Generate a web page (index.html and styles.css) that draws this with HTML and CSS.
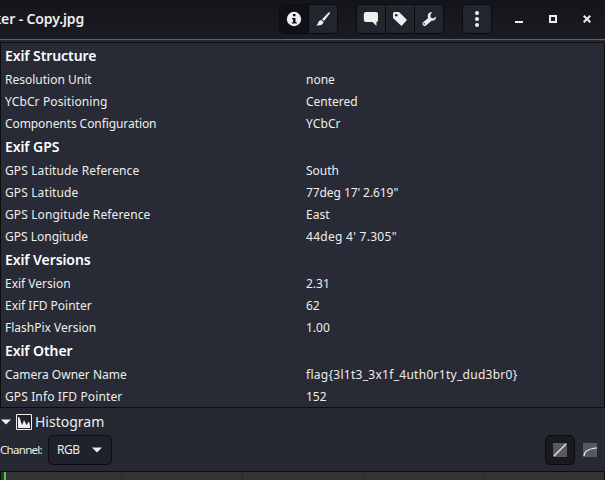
FILE: index.html
```html
<!DOCTYPE html>
<html lang="en"><head><meta charset="utf-8"><title>Metadata</title><link rel="stylesheet" href="styles.css"></head>
<body>
<header class="titlebar">
  <div class="title">ker - Copy.jpg</div>
  <div class="group info-tools">
    <button class="tool active"><svg width="16" height="16" viewBox="0 0 16 16"><circle cx="8" cy="8" r="7.2" fill="#eeeeec"/><path d="M7 3h2.500v2.300H7zM6 7h3.500v4.300h1.300v1.200H5.800v-1.200H7V8.200H6z" fill="#101116"/></svg></button>
    <button class="tool"><svg width="16" height="16" viewBox="0 0 16 16" fill="#eeeeec"><path d="M14.500 1q1 .5 0 2L9 10 7 8.300 13 2zM6.300 9l2.200 2q-.5 4-7.500 3.500 2-1 2.200-3Q4 9.200 6.300 9z"/></svg></button>
  </div>
  <div class="group view-tools">
    <button class="tool"><svg width="16" height="16" viewBox="0 0 16 16" fill="#eeeeec"><path d="M3 1h10q2 0 2 2v6q0 2-1.500 2v4L9.500 11H3q-2.200 0-2.200-2V3q0-2 2.200-2z"/></svg></button>
    <button class="tool"><svg width="16" height="16" viewBox="0 0 16 16"><path d="M2 1h5l8 8-5.500 6L1 7V2z" fill="#eeeeec"/><circle cx="4.200" cy="4.200" r="1.300" fill="#22242e"/></svg></button>
    <button class="tool"><svg width="16" height="16" viewBox="0 0 16 16"><path d="M11.500 1 9.500 3.500v3l3 1 2.500-2q.5 4-4.500 4.300L5 14.500q-1.500 1.300-3-.2t0-3l5-4Q5.500 1 11.500 1z" fill="#eeeeec"/><circle cx="3.200" cy="12.800" r=".8" fill="#22242e"/></svg></button>
  </div>
  <div class="group menu"><button class="tool"><svg width="16" height="16" viewBox="0 0 16 16" fill="#eeeeec"><circle cx="8" cy="2" r="2"/><circle cx="8" cy="8" r="2"/><circle cx="8" cy="14" r="2"/></svg></button></div>
  <div class="window-buttons">
    <svg width="8" height="8" viewBox="0 0 8 8"><path d="M0 6h8v2H0z" fill="#eeeeec"/></svg>
    <svg width="8" height="8" viewBox="0 0 8 8"><path d="M1 1h6v6H1z" fill="none" stroke="#eeeeec" stroke-width="2"/></svg>
    <svg width="8" height="8" viewBox="0 0 8 8"><path d="M.7.7l6.600 6.600m0-6.600L.7 7.300" stroke="#eeeeec" stroke-width="2"/></svg>
  </div>
</header>
<main class="metadata">
  <h2>Exif Structure</h2>
  <div class="row"><span>Resolution Unit</span><span>none</span></div>
  <div class="row"><span class="loose">YCbCr Positioning</span><span>Centered</span></div>
  <div class="row"><span class="tight">Components Configuration</span><span class="loose">YCbCr</span></div>
  <h2>Exif GPS</h2>
  <div class="row"><span class="loose">GPS Latitude Reference</span><span>South</span></div>
  <div class="row"><span class="loose">GPS Latitude</span><span class="tight">77deg 17' 2.619"</span></div>
  <div class="row"><span class="loose">GPS Longitude Reference</span><span>East</span></div>
  <div class="row"><span>GPS Longitude</span><span class="wide">44deg 4' 7.305"</span></div>
  <h2>Exif Versions</h2>
  <div class="row"><span>Exif Version</span><span>2.31</span></div>
  <div class="row"><span>Exif IFD Pointer</span><span>62</span></div>
  <div class="row"><span>FlashPix Version</span><span>1.00</span></div>
  <h2>Exif Other</h2>
  <div class="row"><span>Camera Owner Name</span><span class="wide">flag{3l1t3_3x1f_4uth0r1ty_dud3br0}</span></div>
  <div class="row"><span class="loose">GPS Info IFD Pointer</span><span>152</span></div>
</main>
<section class="histogram">
  <div class="expander">
    <svg width="10" height="6" viewBox="0 0 10 6"><path d="M0 .5h10L5 5.500z" fill="#eeeeec"/></svg>
    <svg class="hist-icon" width="16" height="16" viewBox="0 0 16 16"><path d="M.5.5h15v15H.5z" fill="#20222b" stroke="#eeeeec"/><path d="M2 14V3h1l1 2 2 6 1-2 1-3 2 4 1 1 1-3h1l1 3v3z" fill="#eeeeec"/></svg>
    <span>Histogram</span>
  </div>
  <div class="controls">
    <span class="channel">Channel:</span>
    <button class="select"><span>RGB</span><svg width="10" height="6" viewBox="0 0 10 6"><path d="M0 .5h10L5 5.500z" fill="#eeeeec"/></svg></button>
    <button class="scale active"><svg width="14" height="14" viewBox="0 0 14 14"><path d="M0 0h14v14H0z" fill="#58595f"/><path d="M1 13 13 1" stroke="#eeeeec" stroke-width="1.200"/></svg></button>
    <button class="scale"><svg width="14" height="14" viewBox="0 0 14 14"><path d="M0 0h14v14H0z" fill="#58595f"/><path d="M1 13Q1 6 14 5" fill="none" stroke="#eeeeec" stroke-width="1.200"/></svg></button>
  </div>
  <div class="graph"><i></i><i></i><i></i><i></i><i></i></div>
</section>
</body></html>
```
FILE: styles.css
```css
* { box-sizing: border-box; }
body { margin: 0; width: 605px; height: 480px; overflow: hidden; background: #262832; color: #eeeeec; font: 12px/22px "Noto Sans", sans-serif; }
button { font: inherit; color: inherit; padding: 0; border: 0; background: none; display: flex; align-items: center; justify-content: center; }
svg { display: block; flex: none; }
.titlebar { height: 40px; display: flex; align-items: flex-start; background: linear-gradient(#14151a, #1b1c22); border-bottom: 1px solid #2b6be0; }
.title { width: 279px; margin-left: -7px; padding-top: 8px; font-size: 14px; font-weight: 600; letter-spacing: -.12px; white-space: nowrap; }
.group { display: flex; height: 30px; margin-top: 4px; border: 1px solid #0c0d11; border-radius: 5px; background: #22242e; overflow: hidden; flex: none; }
.info-tools { width: 59px; margin-left: 7px; }
.view-tools { width: 88px; margin-left: 18px; }
.menu { width: 30px; margin-left: 18px; }
.tool { flex: 1; }
.tool + .tool { border-left: 1px solid #0c0d11; }
.tool.active { background: #101116; }
.window-buttons { display: flex; gap: 26px; margin: 15px 0 0 23px; }
.metadata { height: 366px; margin-top: 2px; border: 1px solid #0c0d11; background: #282a36; }
h2 { height: 25px; margin: 0; padding-left: 4px; font-size: 14px; line-height: 25px; font-weight: 600; letter-spacing: -.08px; color: #fff; }
.row { height: 22px; display: grid; grid-template-columns: 301px 1fr; padding-left: 4px; line-height: 24px; white-space: pre; }
.loose { letter-spacing: .12px; }
.tight { letter-spacing: -.08px; }
.wide { letter-spacing: .28px; }
.expander { height: 27px; display: flex; align-items: center; padding: 1px 0 0 1px; font-size: 14px; }
.hist-icon { margin: 0 3px 0 5px; }
.controls { height: 30px; display: flex; align-items: center; }
.channel { width: 48px; font-size: 11.5px; letter-spacing: -.7px; }
.select { width: 64px; height: 30px; margin-right: auto; justify-content: space-between; padding: 0 9px 0 8px; border: 1px solid #0c0d11; border-radius: 5px; background: #20222b; letter-spacing: -.5px; }
.scale { width: 30px; height: 30px; border-radius: 5px; }
.scale.active { background: #191a20; border: 1px solid #0c0d11; }
.graph { height: 12px; margin-top: 6px; display: grid; grid-template-columns: repeat(5, 121px); background: #333; border: 1px solid #0c0d11; }
.graph i { border-right: 1px solid #292929; }
.graph i:first-child { border-left: 2px solid #4dc84d; margin-left: 3px; }
```
